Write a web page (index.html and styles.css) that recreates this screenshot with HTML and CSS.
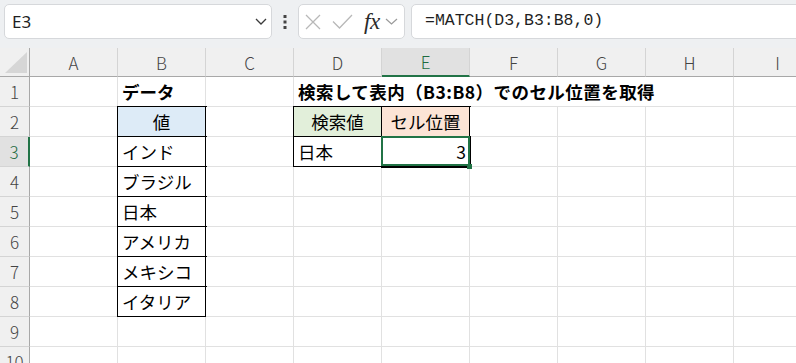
FILE: index.html
```html
<!DOCTYPE html>
<html lang="ja">
<head>
<meta charset="utf-8">
<title>Excel MATCH</title>
<link rel="stylesheet" href="styles.css">
</head>
<body>
<div class="toolbar">
  <div class="namebox">
    <span class="nb-text">E3</span>
    <svg class="chev" width="12" height="7" viewBox="0 0 12 7"><polyline points="1,1 6,6 11,1" fill="none" stroke="#3a3a3a" stroke-width="1.3"/></svg>
  </div>
  <svg class="dots" width="4" height="14" viewBox="0 0 4 14"><rect x="0.5" y="0" width="3" height="3" fill="#444"/><rect x="0.5" y="5.5" width="3" height="3" fill="#444"/><rect x="0.5" y="11" width="3" height="3" fill="#444"/></svg>
  <div class="fxbox">
    <svg class="ic-x" width="16" height="16" viewBox="0 0 16 16"><path d="M1 1 L15 15 M15 1 L1 15" stroke="#b8b8b8" stroke-width="1.3" fill="none"/></svg>
    <svg class="ic-ok" width="21" height="15" viewBox="0 0 21 15"><polyline points="1,7.5 7.5,14 20,1" fill="none" stroke="#b8b8b8" stroke-width="1.3"/></svg>
    <span class="fx">fx</span>
    <svg class="ic-chev" width="13" height="7" viewBox="0 0 13 7"><polyline points="1,1 6.5,6 12,1" fill="none" stroke="#9a9a9a" stroke-width="1.2"/></svg>
  </div>
  <div class="formula"><span class="ftext">=MATCH(D3,B3:B8,0)</span></div>
</div>
<div class="sheet">
  <div class="c corner"><svg width="29" height="28" viewBox="0 0 29 28"><polygon points="5,25 27,25 27,4" fill="#d6d6d6"/></svg></div>
  <div class="c ch">A</div><div class="c ch">B</div><div class="c ch">C</div><div class="c ch">D</div><div class="c ch sel">E</div><div class="c ch">F</div><div class="c ch">G</div><div class="c ch">H</div><div class="c ch">I</div>

  <div class="c rh">1</div>
  <div class="c"></div><div class="c b">データ</div><div class="c"></div><div class="c b span5 title">検索して表内（B3:B8）でのセル位置を取得</div><div class="c"></div>

  <div class="c rh">2</div>
  <div class="c"></div><div class="c t blue ctr">値</div><div class="c"></div><div class="c t green ctr">検索値</div><div class="c t orange ctr">セル位置</div><div class="c"></div><div class="c"></div><div class="c"></div><div class="c"></div>

  <div class="c rh sel">3</div>
  <div class="c"></div><div class="c t">インド</div><div class="c"></div><div class="c t">日本</div><div class="c t num active">3</div><div class="c"></div><div class="c"></div><div class="c"></div><div class="c"></div>

  <div class="c rh">4</div>
  <div class="c"></div><div class="c t">ブラジル</div><div class="c"></div><div class="c"></div><div class="c"></div><div class="c"></div><div class="c"></div><div class="c"></div><div class="c"></div>

  <div class="c rh">5</div>
  <div class="c"></div><div class="c t">日本</div><div class="c"></div><div class="c"></div><div class="c"></div><div class="c"></div><div class="c"></div><div class="c"></div><div class="c"></div>

  <div class="c rh">6</div>
  <div class="c"></div><div class="c t">アメリカ</div><div class="c"></div><div class="c"></div><div class="c"></div><div class="c"></div><div class="c"></div><div class="c"></div><div class="c"></div>

  <div class="c rh">7</div>
  <div class="c"></div><div class="c t">メキシコ</div><div class="c"></div><div class="c"></div><div class="c"></div><div class="c"></div><div class="c"></div><div class="c"></div><div class="c"></div>

  <div class="c rh">8</div>
  <div class="c"></div><div class="c t">イタリア</div><div class="c"></div><div class="c"></div><div class="c"></div><div class="c"></div><div class="c"></div><div class="c"></div><div class="c"></div>

  <div class="c rh">9</div>
  <div class="c"></div><div class="c"></div><div class="c"></div><div class="c"></div><div class="c"></div><div class="c"></div><div class="c"></div><div class="c"></div><div class="c"></div>

  <div class="c rh">10</div>
  <div class="c"></div><div class="c"></div><div class="c"></div><div class="c"></div><div class="c"></div><div class="c"></div><div class="c"></div><div class="c"></div><div class="c"></div>
</div>
</body>
</html>
```
FILE: styles.css
```css
html, body {
  margin: 0;
  padding: 0;
}
body {
  width: 796px;
  height: 363px;
  overflow: hidden;
  background: #fff;
  font-family: "Noto Sans CJK JP", "Noto Sans", sans-serif;
}

.toolbar {
  display: flex;
  align-items: flex-start;
  height: 48px;
  box-sizing: border-box;
  padding: 4px 0 0 4px;
  background: #eef0f2;
  overflow: hidden;
  width: 796px;
}
.namebox {
  flex: none;
  width: 268px;
  height: 35px;
  box-sizing: border-box;
  border: 1px solid #d6d8db;
  border-radius: 5px;
  background: #fff;
  display: flex;
  align-items: center;
  justify-content: space-between;
  padding: 0 4px 0 7px;
}
.nb-text {
  font-family: "Noto Sans", sans-serif;
  font-size: 17px;
  color: #1f1f1f;
  line-height: 1;
}
.dots {
  flex: none;
  margin: 11px 11px 0 11px;
}
.fxbox {
  flex: none;
  width: 107px;
  height: 35px;
  box-sizing: border-box;
  border: 1px solid #d6d8db;
  border-radius: 5px;
  background: #fff;
  display: flex;
  align-items: center;
  padding-left: 6px;
}
.ic-x { flex: none; }
.ic-ok { flex: none; margin-left: 11px; }
.fx {
  flex: none;
  margin-left: 11px;
  font-family: "Liberation Serif", serif;
  font-style: italic;
  font-size: 23px;
  color: #2a2a2a;
  line-height: 1;
  letter-spacing: -0.5px;
}
.ic-chev { flex: none; margin-left: 5px; }
.formula {
  flex: none;
  width: 420px;
  height: 35px;
  margin-left: 6px;
  box-sizing: border-box;
  border: 1px solid #d6d8db;
  border-radius: 5px;
  background: #fff;
  display: flex;
  align-items: center;
  padding-left: 13px;
}
.ftext {
  font-family: "Liberation Mono", monospace;
  font-size: 16.5px;
  color: #1f1f1f;
  line-height: 1;
}

.sheet {
  display: grid;
  grid-template-columns: 30px repeat(9, 88px);
  grid-template-rows: 29px repeat(10, 30px);
  width: 796px;
  height: 315px;
  overflow: hidden;
}
.c {
  box-sizing: border-box;
  border-right: 1px solid #e1e1e1;
  border-bottom: 1px solid #e1e1e1;
  background: #fff;
  display: flex;
  align-items: center;
  padding: 0 4px;
  font-size: 17.5px;
  line-height: 1;
  color: #000;
  white-space: nowrap;
  min-width: 0;
}
.corner {
  background: #f0f0f0;
  border-right: 1px solid #a8a8a8;
  border-bottom: 1px solid #a8a8a8;
  padding: 0;
  align-items: flex-start;
}
.ch {
  background: #f0f0f0;
  border-right: 1px solid #d4d4d4;
  border-bottom: 1px solid #a8a8a8;
  justify-content: center;
  font-size: 17px;
  font-weight: 300;
  color: #444;
}
.rh {
  background: #f0f0f0;
  border-right: 1px solid #a8a8a8;
  border-bottom: 1px solid #d4d4d4;
  justify-content: center;
  font-size: 17px;
  font-weight: 300;
  color: #444;
  padding: 0;
}
.ch.sel {
  background: #e1e1e1;
  color: #1e6b41;
  border-bottom: 2px solid #217346;
}
.rh.sel {
  background: #e1e1e1;
  color: #1e6b41;
  border-right: 2px solid #217346;
}
.b {
  font-weight: 700;
}
.span5 {
  grid-column: span 5;
}
.title {
  letter-spacing: 0.45px;
}
.t {
  border-right-color: #000;
  border-bottom-color: #000;
  box-shadow: 0 0 0 1px #000;
}
.ctr {
  justify-content: center;
}
.num {
  justify-content: flex-end;
  padding-right: 3px;
}
.blue { background: #ddebf7; }
.green { background: #e2efda; }
.orange { background: #fce4d6; }
.active {
  position: relative;
}
.active::after {
  content: "";
  position: absolute;
  left: -1px;
  top: -1px;
  right: -1px;
  bottom: 0;
  border: 2px solid #217346;
}
.active::before {
  content: "";
  position: absolute;
  right: -3px;
  bottom: -3px;
  width: 5px;
  height: 5px;
  background: #217346;
  z-index: 1;
}
```
